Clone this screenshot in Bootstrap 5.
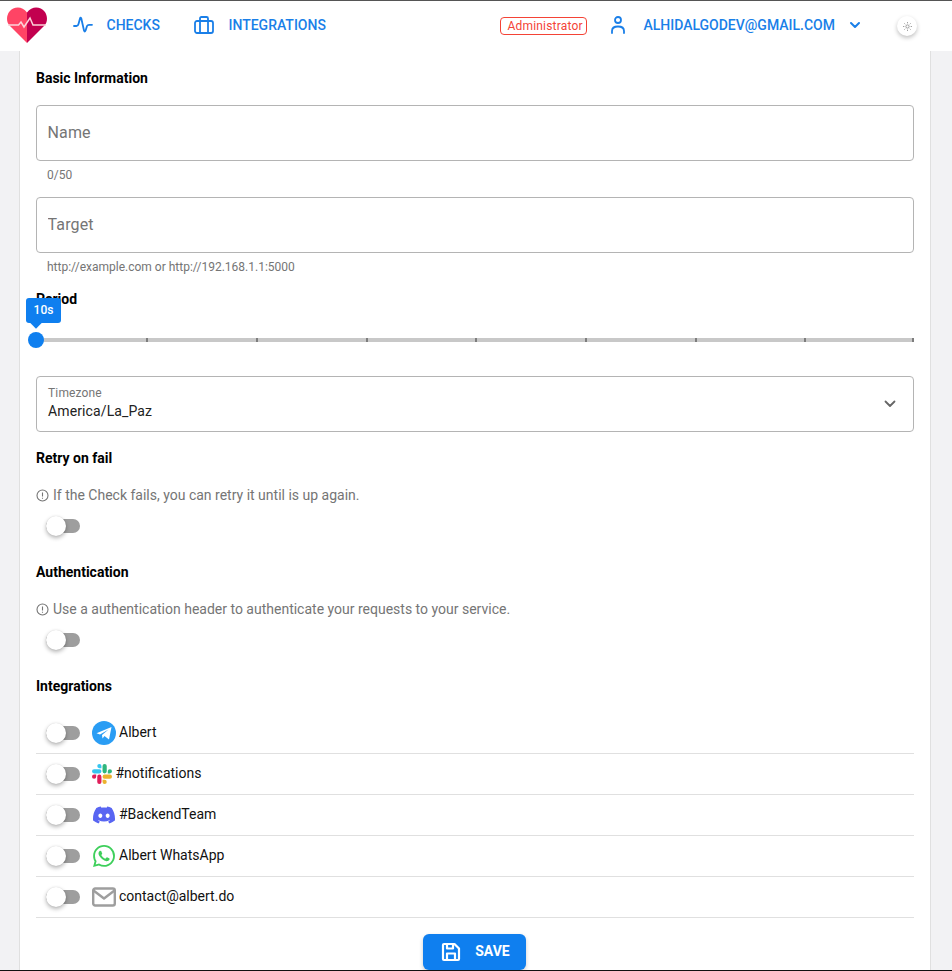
<!DOCTYPE html>
<html lang="en">
<head>
<meta charset="utf-8">
<title>New Check</title>
<link rel="stylesheet" href="https://cdn.jsdelivr.net/npm/bootstrap@5.3.0/dist/css/bootstrap.min.css">
<style>
html,body{height:971px;overflow:hidden}
body{font-family:Roboto,"Liberation Sans",sans-serif;background:#f2f2f4;color:#000;font-size:14px}
.frame{height:971px;border-top:1px solid #555;border-bottom:1px solid #111;display:flex;flex-direction:column;overflow:hidden}
.topbar{height:50px;flex:none;background:#fff;padding:0 35px 0 7px;flex-wrap:nowrap;align-items:center;display:flex}
.logo{width:40px;height:36px;margin-top:-2px;display:block}
.top-link{display:flex;align-items:center;color:#1a7fe8;font-weight:500;font-size:14px;text-decoration:none;text-transform:uppercase;white-space:nowrap;margin-top:-2px}
.top-link svg{display:block;flex:none}
.link-checks{margin-left:26px;margin-right:34.5px}
.link-checks svg{margin-right:13.5px}
.link-integ svg{margin-right:14px}
.role-tag{border:1px solid #f44336;border-radius:4px;color:#f44336;font-size:12px;line-height:16px;padding:0 6px;margin-left:auto;margin-right:24px;letter-spacing:.2px;margin-top:-1px;width:87px;text-align:center;white-space:nowrap}
.user-link svg.person{margin-right:18px}
.user-link svg.chev{margin-left:14px;margin-right:0}
.theme-btn{width:20px;height:20px;padding:0;border:0;border-radius:50%;background:#fff;box-shadow:0 2px 4px rgba(0,0,0,.25);margin-left:36px;display:flex;align-items:center;justify-content:center;flex:none}
.sheet{width:912px;margin-left:19px;flex:1;background:#fff;border:0;border-left:1px solid #e0e0e0;border-right:1px solid #e0e0e0;border-radius:0;padding:17px 16px 0;min-height:0}
.sec-title{font-weight:700;font-size:14px;line-height:20px;margin:0}
.m-first{margin-bottom:17px}
.field{height:56px;border:1px solid #b4b4b4;border-radius:4px;font-size:16px;padding:0 10.5px 2px;color:#000}
.field::placeholder{color:#757575;letter-spacing:.15px}
.field-hint{height:36px;padding:6px 11px 0;font-size:12px;line-height:16px;color:#757575}
.slide-box{position:relative;height:67px}
.slide-track{position:absolute;left:0;right:0;top:29px;height:4px;background:#c8c8c8;display:flex;justify-content:space-between}
.slide-tick{width:2px;height:4px;background:#7d7d7d;margin:0 -2.5px 0 .5px}
.slide-tick:first-child{visibility:hidden}
.slide-tick:last-child{margin:0 0 0 -1.5px}
.slide-knob{position:absolute;left:-8px;top:23px;width:16px;height:16px;border-radius:50%;background:#0f7fef}
.slide-tip{position:absolute;left:-10px;top:-11px;width:35px;height:25px;background:#0f7fef;color:#fff;border-radius:3px;font-size:12px;font-weight:500;line-height:25px;text-align:center}
.slide-tip::after{content:"";position:absolute;left:10px;bottom:-4px;width:8px;height:8px;margin-left:-4px;background:#0f7fef;transform:rotate(45deg)}
.tz-box{height:56px;border:1px solid #b4b4b4;border-radius:4px;padding:0 11px;display:flex;align-items:center;justify-content:space-between;margin-bottom:16px}
.tz-copy{margin-top:-3px}
.tz-label{font-size:12px;line-height:16px;color:#757575;margin-top:1px;letter-spacing:.15px}
.tz-value{font-size:14px;line-height:20px;color:#222;letter-spacing:.12px}
.tz-chev{margin-right:6px}
.help-line{display:flex;align-items:center;color:#757575;font-size:14px;line-height:20px;margin-top:17px;margin-bottom:11px;white-space:nowrap}
.help-line svg{margin-right:4px;flex:none}
.sw-wrap{padding:0;margin:0 0 0 10px;min-height:0;height:20px;display:flex;align-items:center;flex:none}
.form-switch .sw-input{appearance:none;-webkit-appearance:none;position:relative;width:34px;height:14px;margin:0;border:0;border-radius:7px;background:#9e9e9e;background-image:none;box-shadow:none;float:none}
.sw-input::after{content:"";position:absolute;left:0;top:-3px;width:20px;height:20px;border-radius:50%;background:#fff;box-shadow:0 2px 4px rgba(0,0,0,.3),0 0 1px rgba(0,0,0,.15)}
.mt-sec{margin-top:26px}
.int-list{margin-top:17px}
.int-row{height:41px;padding:0;display:flex;align-items:center;font-size:14px;line-height:20px;color:#111;border-color:#e0e0e0;background:transparent}
.list-group-flush>.int-row:last-child{border-bottom-width:1px}
.int-text{margin-top:-2px}
.int-icon{display:block;flex:none}
.ic-a{margin-left:12px;margin-right:3px}
.ic-b{margin-left:12px;margin-right:3.5px}
.ic-c{margin-left:13px;margin-right:4px}
.ic-d{margin-left:13px;margin-right:4px}
.save-row{display:flex;justify-content:center;margin-top:16px}
.save-btn{width:103px;height:36px;background:#0f7fef;border:0;border-radius:6px;color:#fff;font-size:14px;font-weight:700;display:flex;align-items:center;justify-content:center;padding:0 0 2px 2px;margin-right:1px;box-shadow:0 2px 4px rgba(0,0,0,.2)}
.save-btn svg{margin-right:14px;margin-top:2px}
</style>
</head>
<body>
<div class="frame">
  <nav class="navbar topbar">
    <svg class="logo" viewBox="0 0 40 36" aria-label="logo">
      <path d="M20 36 2.500 18.500C-.8 15-.8 8.500 2.500 4.500 6.500-.5 15-1.500 20 5.500Z" fill="#ff4465"/>
      <path d="M20 36 37.500 18.500C40.800 15 40.800 8.500 37.500 4.500 33.500-.5 25-1.500 20 5.500Z" fill="#c2004f"/>
      <path d="M1 18H11.500L14 15 17 20 23 11 26 18H39" fill="none" stroke="#fbd3d9" stroke-width="1.500"/>
    </svg>
    <a class="top-link link-checks" href="#">
      <svg width="20" height="18" viewBox="0 0 20 18" fill="none" stroke="#1a7fe8" stroke-width="1.800" stroke-linecap="round" stroke-linejoin="round"><path d="M1 10H3.500Q5 10 5.500 8L7 2.500Q7.500 1 8.300 2.500L11 14.500Q11.700 16.500 12.600 14.500L14 10Q14.500 8.800 16 8.800H19"/></svg>
      Checks
    </a>
    <a class="top-link link-integ" href="#">
      <svg width="20" height="18" viewBox="0 0 20 18" fill="none" stroke="#1a7fe8" stroke-width="1.800" stroke-linecap="round" stroke-linejoin="round"><rect x="1" y="5" width="18" height="12" rx="2"/><path d="M6 5V2.500Q6 1 7.500 1H12.500Q14 1 14 2.500V5M6 5V17M14 5V17"/></svg>
      Integrations
    </a>
    <span class="role-tag">Administrator</span>
    <a class="top-link user-link" href="#">
      <svg class="person" width="14" height="18" viewBox="0 0 14 18" fill="none" stroke="#1a7fe8" stroke-width="1.800" stroke-linecap="round"><circle cx="7" cy="4" r="3"/><path d="M1 17V15Q1 10.500 7 10.500T13 15V17"/></svg>
      alhidalgodev@gmail.com
      <svg class="chev" width="12" height="8" viewBox="0 0 12 8" fill="none" stroke="#1a7fe8" stroke-width="2" stroke-linecap="round" stroke-linejoin="round"><path d="M2 2 6 6 10 2"/></svg>
    </a>
    <button class="theme-btn" type="button" aria-label="Theme">
      <svg width="9" height="9" viewBox="0 0 10 10" fill="none" stroke="#8a8a8a" stroke-width=".9"><circle cx="5" cy="5" r="1.800"/><path d="M5 0V1.500M5 8.500V10M0 5H1.500M8.500 5H10M1.500 1.500 2.500 2.500M7.500 7.500 8.500 8.500M1.500 8.500 2.500 7.500M7.500 2.500 8.500 1.500"/></svg>
    </button>
  </nav>

  <main class="card sheet">
    <h2 class="sec-title m-first">Basic Information</h2>
    <input class="form-control field" type="text" placeholder="Name">
    <div class="field-hint">0/50</div>
    <input class="form-control field" type="text" placeholder="Target">
    <div class="field-hint">http://example.com or http://192.168.1.1:5000</div>

    <h2 class="sec-title">Period</h2>
    <div class="slide-box">
      <div class="slide-track">
        <i class="slide-tick"></i><i class="slide-tick"></i><i class="slide-tick"></i><i class="slide-tick"></i><i class="slide-tick"></i><i class="slide-tick"></i><i class="slide-tick"></i><i class="slide-tick"></i><i class="slide-tick"></i>
      </div>
      <div class="slide-knob"></div>
      <div class="slide-tip">10s</div>
    </div>

    <div class="tz-box">
      <div class="tz-copy">
        <div class="tz-label">Timezone</div>
        <div class="tz-value">America/La_Paz</div>
      </div>
      <svg class="tz-chev" width="12" height="8" viewBox="0 0 12 8" fill="none" stroke="#666" stroke-width="1.800" stroke-linecap="round" stroke-linejoin="round"><path d="M1.500 1.500 6 6 10.500 1.500"/></svg>
    </div>

    <h2 class="sec-title">Retry on fail</h2>
    <div class="help-line">
      <svg width="13" height="13" viewBox="0 0 13 13" fill="none" stroke="#757575" stroke-width="1.100"><circle cx="6.500" cy="6.500" r="5.500"/><path d="M6.500 3.500V7.500M6.500 8.700V9.800"/></svg>
      If the Check fails, you can retry it until is up again.
    </div>
    <div class="form-check form-switch sw-wrap"><input class="form-check-input sw-input" type="checkbox" role="switch" aria-label="Retry on fail"></div>

    <h2 class="sec-title mt-sec">Authentication</h2>
    <div class="help-line">
      <svg width="13" height="13" viewBox="0 0 13 13" fill="none" stroke="#757575" stroke-width="1.100"><circle cx="6.500" cy="6.500" r="5.500"/><path d="M6.500 3.500V7.500M6.500 8.700V9.800"/></svg>
      Use a authentication header to authenticate your requests to your service.
    </div>
    <div class="form-check form-switch sw-wrap"><input class="form-check-input sw-input" type="checkbox" role="switch" aria-label="Authentication"></div>

    <h2 class="sec-title mt-sec">Integrations</h2>
    <ul class="list-group list-group-flush int-list">
      <li class="list-group-item int-row">
        <div class="form-check form-switch sw-wrap"><input class="form-check-input sw-input" type="checkbox" role="switch" aria-label="Albert"></div>
        <svg class="int-icon ic-a" width="24" height="24" viewBox="0 0 24 24"><circle cx="12" cy="12" r="12" fill="#2a9df4"/><path d="M4.500 12.200 19.500 6 17 18.500 12.500 15 10.500 17.500 10 14 16.500 8.500 8 13.500Z" fill="#fff"/></svg>
        <span class="int-text">Albert</span>
      </li>
      <li class="list-group-item int-row">
        <div class="form-check form-switch sw-wrap"><input class="form-check-input sw-input" type="checkbox" role="switch" aria-label="notifications"></div>
        <svg class="int-icon ic-b" width="20" height="20" viewBox="0 0 24 24"><path fill="#E01E5A" d="M5.042 15.165a2.528 2.528 0 0 1-2.52 2.523A2.528 2.528 0 0 1 0 15.165a2.527 2.527 0 0 1 2.522-2.52h2.52v2.52zM6.313 15.165a2.527 2.527 0 0 1 2.521-2.52 2.527 2.527 0 0 1 2.521 2.52v6.313A2.528 2.528 0 0 1 8.834 24a2.528 2.528 0 0 1-2.521-2.522v-6.313z"/><path fill="#36C5F0" d="M8.834 5.042a2.528 2.528 0 0 1-2.521-2.52A2.528 2.528 0 0 1 8.834 0a2.528 2.528 0 0 1 2.521 2.522v2.52H8.834zM8.834 6.313a2.528 2.528 0 0 1 2.521 2.521 2.528 2.528 0 0 1-2.521 2.521H2.522A2.528 2.528 0 0 1 0 8.834a2.528 2.528 0 0 1 2.522-2.521h6.312z"/><path fill="#2EB67D" d="M18.956 8.834a2.528 2.528 0 0 1 2.522-2.521A2.528 2.528 0 0 1 24 8.834a2.528 2.528 0 0 1-2.522 2.521h-2.522V8.834zM17.688 8.834a2.528 2.528 0 0 1-2.523 2.521 2.527 2.527 0 0 1-2.52-2.521V2.522A2.527 2.527 0 0 1 15.165 0a2.528 2.528 0 0 1 2.523 2.522v6.312z"/><path fill="#ECB22E" d="M15.165 18.956a2.528 2.528 0 0 1 2.523 2.522A2.528 2.528 0 0 1 15.165 24a2.527 2.527 0 0 1-2.52-2.522v-2.522h2.52zM15.165 17.688a2.527 2.527 0 0 1-2.52-2.523 2.526 2.526 0 0 1 2.52-2.52h6.313A2.527 2.527 0 0 1 24 15.165a2.528 2.528 0 0 1-2.522 2.523h-6.313z"/></svg>
        <span class="int-text">#notifications</span>
      </li>
      <li class="list-group-item int-row">
        <div class="form-check form-switch sw-wrap"><input class="form-check-input sw-input" type="checkbox" role="switch" aria-label="BackendTeam"></div>
        <svg class="int-icon ic-c" width="22" height="22" viewBox="0 0 24 24"><path fill="#5865F2" d="M20.317 4.3698a19.7913 19.7913 0 00-4.8851-1.5152.0741.0741 0 00-.0785.0371c-.211.3753-.4447.8648-.6083 1.2495-1.8447-.2762-3.68-.2762-5.4868 0-.1636-.3933-.4058-.8742-.6177-1.2495a.077.077 0 00-.0785-.037 19.7363 19.7363 0 00-4.8852 1.515.0699.0699 0 00-.0321.0277C.5334 9.0458-.319 13.5799.0992 18.0578a.0824.0824 0 00.0312.0561c2.0528 1.5076 4.0413 2.4228 5.9929 3.0294a.0777.0777 0 00.0842-.0276c.4616-.6304.8731-1.2952 1.226-1.9942a.076.076 0 00-.0416-.1057c-.6528-.2476-1.2743-.5495-1.8722-.8923a.077.077 0 01-.0076-.1277c.1258-.0943.2517-.1923.3718-.2914a.0743.0743 0 01.0776-.0105c3.9278 1.7933 8.18 1.7933 12.0614 0a.0739.0739 0 01.0785.0095c.1202.099.246.1981.3728.2924a.077.077 0 01-.0066.1276 12.2986 12.2986 0 01-1.873.8914.0766.0766 0 00-.0407.1067c.3604.698.7719 1.3628 1.225 1.9932a.076.076 0 00.0842.0286c1.961-.6067 3.9495-1.5219 6.0023-3.0294a.077.077 0 00.0313-.0552c.5004-5.177-.8382-9.6739-3.5485-13.6604a.061.061 0 00-.0312-.0286zM8.02 15.3312c-1.1825 0-2.1569-1.0857-2.1569-2.419 0-1.3332.9555-2.4189 2.157-2.4189 1.2108 0 2.1757 1.0952 2.1568 2.419 0 1.3332-.9555 2.4189-2.1569 2.4189zm7.9748 0c-1.1825 0-2.1569-1.0857-2.1569-2.419 0-1.3332.9554-2.4189 2.1569-2.4189 1.2108 0 2.1757 1.0952 2.1568 2.419 0 1.3332-.946 2.4189-2.1568 2.4189Z"/></svg>
        <span class="int-text">#BackendTeam</span>
      </li>
      <li class="list-group-item int-row">
        <div class="form-check form-switch sw-wrap"><input class="form-check-input sw-input" type="checkbox" role="switch" aria-label="WhatsApp"></div>
        <svg class="int-icon ic-d" width="22" height="22" viewBox="0 0 24 24"><path fill="#3ecf5b" d="M17.472 14.382c-.297-.149-1.758-.867-2.03-.967-.273-.099-.471-.148-.67.15-.197.297-.767.966-.94 1.164-.173.199-.347.223-.644.075-.297-.15-1.255-.463-2.39-1.475-.883-.788-1.48-1.761-1.653-2.059-.173-.297-.018-.458.13-.606.134-.133.298-.347.446-.52.149-.174.198-.298.298-.497.099-.198.05-.371-.025-.52-.075-.149-.669-1.612-.916-2.207-.242-.579-.487-.5-.669-.51-.173-.008-.371-.01-.57-.01-.198 0-.52.074-.792.372-.272.297-1.04 1.016-1.04 2.479 0 1.462 1.065 2.875 1.213 3.074.149.198 2.096 3.2 5.077 4.487.709.306 1.262.489 1.694.625.712.227 1.36.195 1.871.118.571-.085 1.758-.719 2.006-1.413.248-.694.248-1.289.173-1.413-.074-.124-.272-.198-.57-.347m-5.421 7.403h-.004a9.87 9.87 0 01-5.031-1.378l-.361-.214-3.741.982.998-3.648-.235-.374a9.86 9.86 0 01-1.51-5.26c.001-5.45 4.436-9.884 9.888-9.884 2.64 0 5.122 1.03 6.988 2.898a9.825 9.825 0 012.893 6.994c-.003 5.45-4.437 9.884-9.885 9.884m8.413-18.297A11.815 11.815 0 0012.05 0C5.495 0 .16 5.335.157 11.892c0 2.096.547 4.142 1.588 5.945L.057 24l6.305-1.654a11.882 11.882 0 005.683 1.448h.005c6.554 0 11.89-5.335 11.893-11.893a11.821 11.821 0 00-3.48-8.413z"/></svg>
        <span class="int-text">Albert WhatsApp</span>
      </li>
      <li class="list-group-item int-row">
        <div class="form-check form-switch sw-wrap"><input class="form-check-input sw-input" type="checkbox" role="switch" aria-label="Email"></div>
        <svg class="int-icon ic-a" width="24" height="20" viewBox="0 0 24 20" fill="none" stroke="#9e9e9e" stroke-width="2.400" stroke-linejoin="round"><rect x="1.200" y="1.500" width="21.600" height="17" rx="2"/><path d="M1.500 3.500 12 11.500 22.500 3.500"/></svg>
        <span class="int-text">contact@albert.do</span>
      </li>
    </ul>
    <div class="save-row">
      <button class="btn btn-primary save-btn" type="button">
        <svg width="20" height="20" viewBox="0 0 20 20" fill="none" stroke="#fff" stroke-width="2.200" stroke-linejoin="round"><path d="M2 3Q2 2 3 2H13.500L18 6.500V17Q18 18 17 18H3Q2 18 2 17Z"/><path d="M6 2V6.500H12V2M6 18V11.500H14V18"/></svg>
        SAVE
      </button>
    </div>
  </main>
</div>
</body>
</html>
